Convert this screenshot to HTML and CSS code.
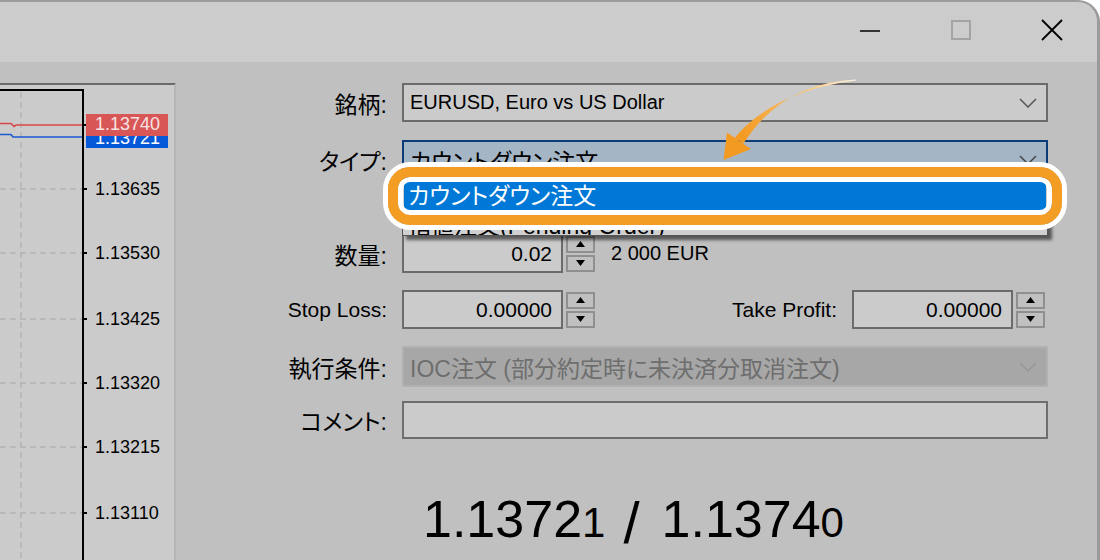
FILE: index.html
```html
<!DOCTYPE html>
<html>
<head>
<meta charset="utf-8">
<link rel="stylesheet" href="styles.css">
</head>
<body>
	<div class="window">
		<div class="titlebar">
			<span class="tbtn"><svg width="20" height="20"><line x1="0" y1="11" x2="20" y2="11" stroke="#000" stroke-width="1.6"/></svg></span>
			<span class="tbtn"><svg width="20" height="20"><rect x="1" y="1" width="18" height="18" fill="none" stroke="#a3a3a3" stroke-width="2"/></svg></span>
			<span class="tbtn"><svg width="22" height="22"><path d="M1 1L21 21M21 1L1 21" stroke="#000" stroke-width="1.8"/></svg></span>
		</div>
		<div class="main">
			<div class="chart">
				<svg width="174" height="475" viewBox="0 85 174 475">
					<g stroke="#b4b4b4" stroke-width="1.5" stroke-dasharray="6 4" fill="none">
						<line x1="21" y1="92" x2="21" y2="560"/>
						<line x1="0" y1="189" x2="82" y2="189"/>
						<line x1="0" y1="253" x2="82" y2="253"/>
						<line x1="0" y1="319" x2="82" y2="319"/>
						<line x1="0" y1="383" x2="82" y2="383"/>
						<line x1="0" y1="447" x2="82" y2="447"/>
						<line x1="0" y1="513" x2="82" y2="513"/>
					</g>
					<polyline points="0,123.5 11,123.5 14,126.5 16,125 83,125" fill="none" stroke="#d64848" stroke-width="1.6"/>
					<polyline points="0,134.5 11,134.5 13,137 83,137" fill="none" stroke="#1a5ad0" stroke-width="1.6"/>
					<path d="M0 90H83V560" fill="none" stroke="#000" stroke-width="2"/>
					<path d="M84 125h3M84 189h3M84 253h3M84 319h3M84 383h3M84 447h3M84 513h3" stroke="#000" stroke-width="2"/>
					<g class="axis">
						<rect x="86" y="126" width="82" height="22" fill="#0558d8"/>
						<text x="95" y="143.5" fill="#fff">1.13721</text>
						<rect x="86" y="114" width="82" height="22" fill="#d95656"/>
						<text x="95" y="130" fill="#f6e3e3">1.13740</text>
						<text x="95" y="195">1.13635</text>
						<text x="95" y="259">1.13530</text>
						<text x="95" y="325">1.13425</text>
						<text x="95" y="389">1.13320</text>
						<text x="95" y="453">1.13215</text>
						<text x="95" y="519">1.13110</text>
					</g>
				</svg>
			</div>
			<div class="form">
				<div class="row r1">
					<span class="lbl jp">銘柄:</span>
					<div class="combo"><span class="val">EURUSD, Euro vs US Dollar</span><svg class="chev" width="18" height="10"><polyline points="1,1 9,9 17,1" fill="none" stroke="#555" stroke-width="1.5"/></svg></div>
				</div>
				<div class="row r2">
					<span class="lbl jp">タイプ:</span>
					<div class="combo active"><span class="val jp">カウントダウン注文</span><svg class="chev" width="18" height="10"><polyline points="1,1 9,9 17,1" fill="none" stroke="#444" stroke-width="1.5"/></svg></div>
				</div>
				<div class="row r3">
					<span class="lbl jp">数量:</span>
					<div class="ctl">
						<div class="num">0.02</div>
						<div class="spin">
							<span><svg width="9" height="6"><path d="M4.5 0L9 6H0z"/></svg></span>
							<span><svg width="9" height="6"><path d="M0 0H9L4.5 6z"/></svg></span>
						</div>
						<span class="note">2 000 EUR</span>
					</div>
				</div>
				<div class="row r4">
					<span class="lbl">Stop Loss:</span>
					<div class="ctl">
						<div class="num">0.00000</div>
						<div class="spin">
							<span><svg width="9" height="6"><path d="M4.5 0L9 6H0z"/></svg></span>
							<span><svg width="9" height="6"><path d="M0 0H9L4.5 6z"/></svg></span>
						</div>
						<span class="lbl2">Take Profit:</span>
						<div class="num">0.00000</div>
						<div class="spin">
							<span><svg width="9" height="6"><path d="M4.5 0L9 6H0z"/></svg></span>
							<span><svg width="9" height="6"><path d="M0 0H9L4.5 6z"/></svg></span>
						</div>
					</div>
				</div>
				<div class="row r5">
					<span class="lbl jp">執行条件:</span>
					<div class="combo disabled"><span class="val jp">IOC注文 (部分約定時に未決済分取消注文)</span><svg class="chev" width="18" height="10"><polyline points="1,1 9,9 17,1" fill="none" stroke="#979797" stroke-width="1.5"/></svg></div>
				</div>
				<div class="row r6">
					<span class="lbl jp">コメント:</span>
					<div class="comment"></div>
				</div>
				<div class="price">1.1372<span class="sm">1</span><span class="sep">/</span>1.1374<span class="sm">0</span></div>
			</div>
		</div>
	</div>

	<!-- open list of the type combo -->
	<div class="droplist">
		<div class="opt sel">カウントダウン注文</div>
		<div class="opt">指値注文(Pending Order)</div>
	</div>
	<div class="ring"></div>
	<svg class="arrow" width="200" height="110" viewBox="700 60 200 110">
		<defs>
			<linearGradient id="fade" gradientUnits="userSpaceOnUse" x1="855" y1="80" x2="745" y2="140">
				<stop offset="0" stop-color="#fdf2e0"/>
				<stop offset="0.45" stop-color="#f8bf6c"/>
				<stop offset="1" stop-color="#f39a22"/>
			</linearGradient>
		</defs>
		<path d="M856 79.5Q782 83 743.5 143.5L734.5 138Q774 91 856 80.5Z" fill="url(#fade)"/>
		<path d="M727 132.5L751 149L723.5 160Z" fill="#f39a22"/>
	</svg>
</body>
</html>
```

FILE: styles.css
```css
body{
	margin: 0;
	background: #fff;
	position: relative;
	width: 1100px;
	height: 560px;
	overflow: hidden;
}
.window{
	width: 1097px;
	height: 558px;
	border-top: 2px solid #9b9b9b;
	border-right: 3px solid #9b9b9b;
	border-top-right-radius: 22px;
	background: #c0c0c0;
	overflow: hidden;
}
.titlebar{
	height: 60px;
	box-sizing: border-box;
	padding-bottom: 4px;
	background: #cccccc;
	display: flex;
	justify-content: flex-end;
	align-items: center;
}
.tbtn{
	width: 91px;
	display: flex;
	justify-content: center;
}
.tbtn svg{
	display: block;
}
.main{
	display: flex;
}
.chart{
	width: 174px;
	height: 475px;
	margin-top: 21px;
	border-top: 2px solid #6b6b6b;
	border-right: 2px solid #b5b5b5;
	background: #cbcbcb;
	flex: none;
}
.chart svg{
	display: block;
}
.axis text{
	font-family: "Liberation Sans", sans-serif;
	font-size: 18px;
}
.form{
	flex: 1;
	padding-top: 21px;
	font-family: "Liberation Sans", "Noto Sans CJK JP", sans-serif;
	font-size: 21px;
	color: #000;
	font-feature-settings: "palt";
}
.jp{
	font-size: 23px;
}
.row{
	display: flex;
	align-items: center;
}
.r2{
	margin-top: 18px;
}
.r3{
	margin-top: 55px;
}
.r4{
	margin-top: 17px;
}
.r5{
	margin-top: 17px;
}
.r6{
	margin-top: 14px;
}
.lbl{
	width: 211px;
	margin-right: 15px;
	text-align: right;
	flex: none;
	white-space: nowrap;
}
.combo{
	width: 646px;
	height: 39px;
	box-sizing: border-box;
	border: 2px solid #6b6b6b;
	background: #cbcbcb;
	display: flex;
	align-items: center;
	justify-content: space-between;
	padding: 0 9px 0 6px;
	font-size: 20px;
}
.combo .jp{
	font-size: 23px;
}
.combo.active{
	border-color: #0b3c78;
	background: #a4b6c6;
}
.combo.disabled{
	height: 41px;
	border-color: #b1b1b1;
	background: #a7a7a7;
	color: #6e6e6e;
}
.chev{
	display: block;
}
.ctl{
	width: 646px;
	padding-right: 3px;
	box-sizing: border-box;
	display: flex;
	align-items: center;
}
.num{
	width: 161px;
	height: 39px;
	box-sizing: border-box;
	border: 2px solid #6b6b6b;
	background: #cbcbcb;
	text-align: right;
	padding-right: 9px;
	line-height: 35px;
}
.spin{
	width: 29px;
	margin-left: 3px;
	display: flex;
	flex-direction: column;
	gap: 2px;
}
.spin span{
	height: 17px;
	box-sizing: border-box;
	border: 2px solid #8f8f8f;
	display: flex;
	align-items: center;
	justify-content: center;
}
.spin svg{
	display: block;
}
.note{
	margin-left: 16px;
	font-size: 20px;
}
.lbl2{
	margin-left: auto;
	margin-right: 15px;
}
.comment{
	width: 646px;
	height: 38px;
	box-sizing: border-box;
	border: 2px solid #6e6e6e;
	background: #cbcbcb;
}
.price{
	margin-top: 54px;
	margin-left: 247px;
	font-size: 52px;
	line-height: 52px;
	white-space: nowrap;
}
.price .sm{
	font-size: 42px;
}
.price .sep{
	font-size: 58px;
	margin: 0 22px 0 18px;
	vertical-align: -6px;
}
.droplist{
	position: absolute;
	left: 402px;
	top: 178px;
	width: 646px;
	height: 58px;
	box-sizing: border-box;
	padding: 2px 1px 0;
	border: 1px solid #555;
	background: #d0d0d0;
	box-shadow: 4px 4px 3px rgba(0,0,0,0.55);
	font-family: "Liberation Sans", "Noto Sans CJK JP", sans-serif;
	font-size: 23px;
	font-feature-settings: "palt";
	overflow: hidden;
}
.opt{
	height: 30px;
	line-height: 30px;
	padding-left: 4px;
	white-space: nowrap;
}
.opt.sel{
	background: #0078d7;
	color: #fff;
}
.ring{
	position: absolute;
	left: 388px;
	top: 167px;
	width: 674px;
	height: 58px;
	box-sizing: border-box;
	border: 10px solid #f49d25;
	border-radius: 22px;
	box-shadow: 0 0 0 5px #fff, inset 0 0 0 5px #fff;
}
.arrow{
	position: absolute;
	left: 700px;
	top: 60px;
	display: block;
}
```
